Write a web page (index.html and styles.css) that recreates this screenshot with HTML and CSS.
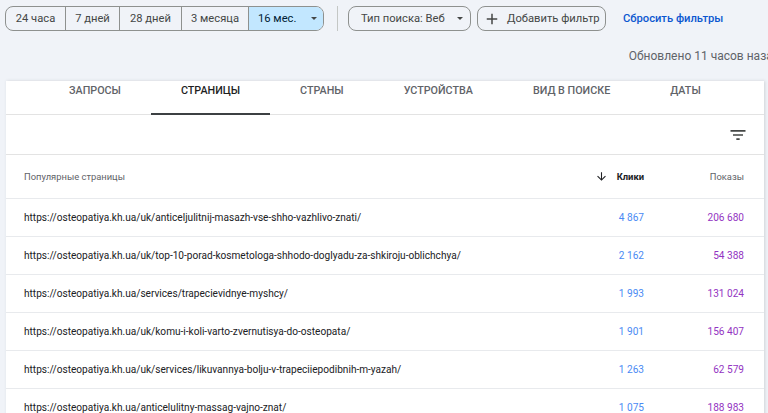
FILE: index.html
```html
<!DOCTYPE html>
<html lang="ru">
<head>
<meta charset="utf-8">
<link rel="stylesheet" href="styles.css">
</head>
<body>
<div class="toolbar">
  <div class="seg">
    <button class="seg-item s1">24 часа</button>
    <button class="seg-item s2">7 дней</button>
    <button class="seg-item s3">28 дней</button>
    <button class="seg-item s4">3 месяца</button>
    <button class="seg-item s5 active">16 мес. <span class="caret"></span></button>
  </div>
  <div class="vdiv"></div>
  <button class="chip chip-type">Тип поиска: Веб <span class="caret"></span></button>
  <button class="chip chip-add"><svg class="plus" viewBox="0 0 24 24" width="18" height="18"><path d="M19 13h-6v6h-2v-6H5v-2h6V5h2v6h6v2z" fill="#444746"/></svg>Добавить фильтр</button>
  <a class="reset">Сбросить фильтры</a>
</div>
<div class="updated"><span>Обновлено 11 часов назад</span></div>
<div class="card">
  <div class="tabs">
    <div class="tab">ЗАПРОСЫ</div>
    <div class="tab active">СТРАНИЦЫ</div>
    <div class="tab">СТРАНЫ</div>
    <div class="tab">УСТРОЙСТВА</div>
    <div class="tab">ВИД В ПОИСКЕ</div>
    <div class="tab">ДАТЫ</div>
  </div>
  <div class="filter-row">
    <svg viewBox="0 0 24 24" width="20" height="20"><path d="M10 18h4v-2h-4v2zM3 6v2h18V6H3zm3 7h12v-2H6v2z" fill="#444746"/></svg>
  </div>
  <div class="row head">
    <div class="c-page">Популярные страницы</div>
    <div class="c-num c-clicks"><svg viewBox="0 0 24 24" width="13" height="13"><path d="M20 12l-1.41-1.41L13 16.17V4h-2v12.17l-5.58-5.59L4 12l8 8 8-8z" fill="#202124"/></svg>Клики</div>
    <div class="c-num c-imp">Показы</div>
  </div>
  <div class="row">
    <div class="c-page">https://osteopatiya.kh.ua/uk/anticeljulitnij-masazh-vse-shho-vazhlivo-znati/</div>
    <div class="c-num clicks">4 867</div>
    <div class="c-num imp">206 680</div>
  </div>
  <div class="row">
    <div class="c-page">https://osteopatiya.kh.ua/uk/top-10-porad-kosmetologa-shhodo-doglyadu-za-shkiroju-oblichchya/</div>
    <div class="c-num clicks">2 162</div>
    <div class="c-num imp">54 388</div>
  </div>
  <div class="row">
    <div class="c-page">https://osteopatiya.kh.ua/services/trapecievidnye-myshcy/</div>
    <div class="c-num clicks">1 993</div>
    <div class="c-num imp">131 024</div>
  </div>
  <div class="row">
    <div class="c-page">https://osteopatiya.kh.ua/uk/komu-i-koli-varto-zvernutisya-do-osteopata/</div>
    <div class="c-num clicks">1 901</div>
    <div class="c-num imp">156 407</div>
  </div>
  <div class="row">
    <div class="c-page">https://osteopatiya.kh.ua/uk/services/likuvannya-bolju-v-trapeciiepodibnih-m-yazah/</div>
    <div class="c-num clicks">1 263</div>
    <div class="c-num imp">62 579</div>
  </div>
  <div class="row">
    <div class="c-page">https://osteopatiya.kh.ua/anticelulitny-massag-vajno-znat/</div>
    <div class="c-num clicks">1 075</div>
    <div class="c-num imp">188 983</div>
  </div>
</div>
</body>
</html>
```
FILE: styles.css
```css
* { box-sizing: border-box; }
html, body { margin: 0; padding: 0; }
body {
  background: #f0f3f8;
  font-family: Roboto, "Noto Sans", Arial, sans-serif;
  color: #1f1f1f;
  overflow: hidden;
  width: 768px;
  height: 413px;
}
button { font-family: inherit; cursor: pointer; white-space: nowrap; }

.toolbar {
  display: flex;
  align-items: center;
  padding: 6px 5px 0;
  height: 31px;
  white-space: nowrap;
}
.seg {
  display: flex;
  flex-shrink: 0;
  height: 25px;
  border: 1px solid #8e918f;
  border-radius: 8px;
  overflow: hidden;
}
.seg-item {
  border: 0;
  border-left: 1px solid #8e918f;
  background: transparent;
  font-size: 11.2px;
  color: #444746;
  padding: 0;
  display: flex;
  align-items: center;
  justify-content: center;
  height: 100%;
  flex-shrink: 0;
}
.seg-item:first-child { border-left: 0; }
.s1 { width: 59px; }
.s2 { width: 54px; }
.s3 { width: 62px; }
.s4 { width: 67px; }
.s5 { width: 75px; }
.seg-item.active {
  background: #c2e7ff;
  color: #001d35;
  justify-content: flex-start;
  padding-left: 9px;
  gap: 15px;
}
.caret {
  width: 0; height: 0;
  border-left: 3.5px solid transparent;
  border-right: 3.5px solid transparent;
  border-top: 3.5px solid #444746;
}
.vdiv {
  width: 1px;
  height: 25px;
  flex-shrink: 0;
  background: #c4c7c5;
  margin: 0 10px 0 13px;
}
.chip {
  height: 25px;
  flex-shrink: 0;
  border: 1px solid #8e918f;
  border-radius: 8px;
  background: transparent;
  font-size: 11.2px;
  color: #444746;
  display: flex;
  align-items: center;
}
.chip-type { width: 123px; padding: 0 0 0 12px; gap: 12px; }
.chip-add { width: 129px; margin-left: 6px; padding: 0 0 0 5px; gap: 6px; }
.reset {
  margin-left: 17px;
  color: #0b57d0;
  font-size: 11.2px;
  font-weight: 500;
}

.updated {
  display: flex;
  justify-content: flex-end;
  margin-right: -12px;
  height: 50px;
  align-items: center;
  font-size: 12px;
  color: #5f6368;
  padding-top: 12px;
  padding-bottom: 12px;
  white-space: nowrap;
}

.card {
  background: #fff;
  margin-left: 6px;
  width: 758px;
  box-shadow: 1px 0 3px rgba(60,64,67,0.18);
}
.tabs {
  display: flex;
  padding-left: 33px;
  height: 34px;
  border-bottom: 1px solid #e3e3e3;
}
.tab {
  padding: 2px 30px 0;
  font-size: 10.75px;
  font-weight: 500;
  color: #5f6368;
  height: 34px;
  line-height: 15px;
  position: relative;
  white-space: nowrap;
}
.tab.active { color: #1f1f1f; }
.tab.active::after {
  content: "";
  position: absolute;
  left: 0; right: 0; bottom: 0;
  height: 2px;
  background: #3c4043;
}
.filter-row {
  height: 40px;
  display: flex;
  justify-content: flex-end;
  align-items: center;
  padding-right: 16px;
  border-bottom: 1px solid #e3e3e3;
}
.filter-row svg { margin-top: 1px; }
.row {
  display: flex;
  align-items: center;
  height: 38px;
  border-bottom: 1px solid #e8eaed;
  padding: 0 20px 0 18px;
  font-size: 10.1px;
  color: #202124;
}
.row.head { height: 44px; font-size: 9.4px; color: #5f6368; }
.c-page { flex: 1; white-space: nowrap; overflow: hidden; }
.c-num { width: 100px; text-align: right; }
.c-clicks {
  display: flex;
  justify-content: flex-end;
  align-items: center;
  gap: 9px;
  font-weight: 700;
  color: #202124;
}
.clicks { color: #4a8af4; }
.imp { color: #9334c2; }
```
